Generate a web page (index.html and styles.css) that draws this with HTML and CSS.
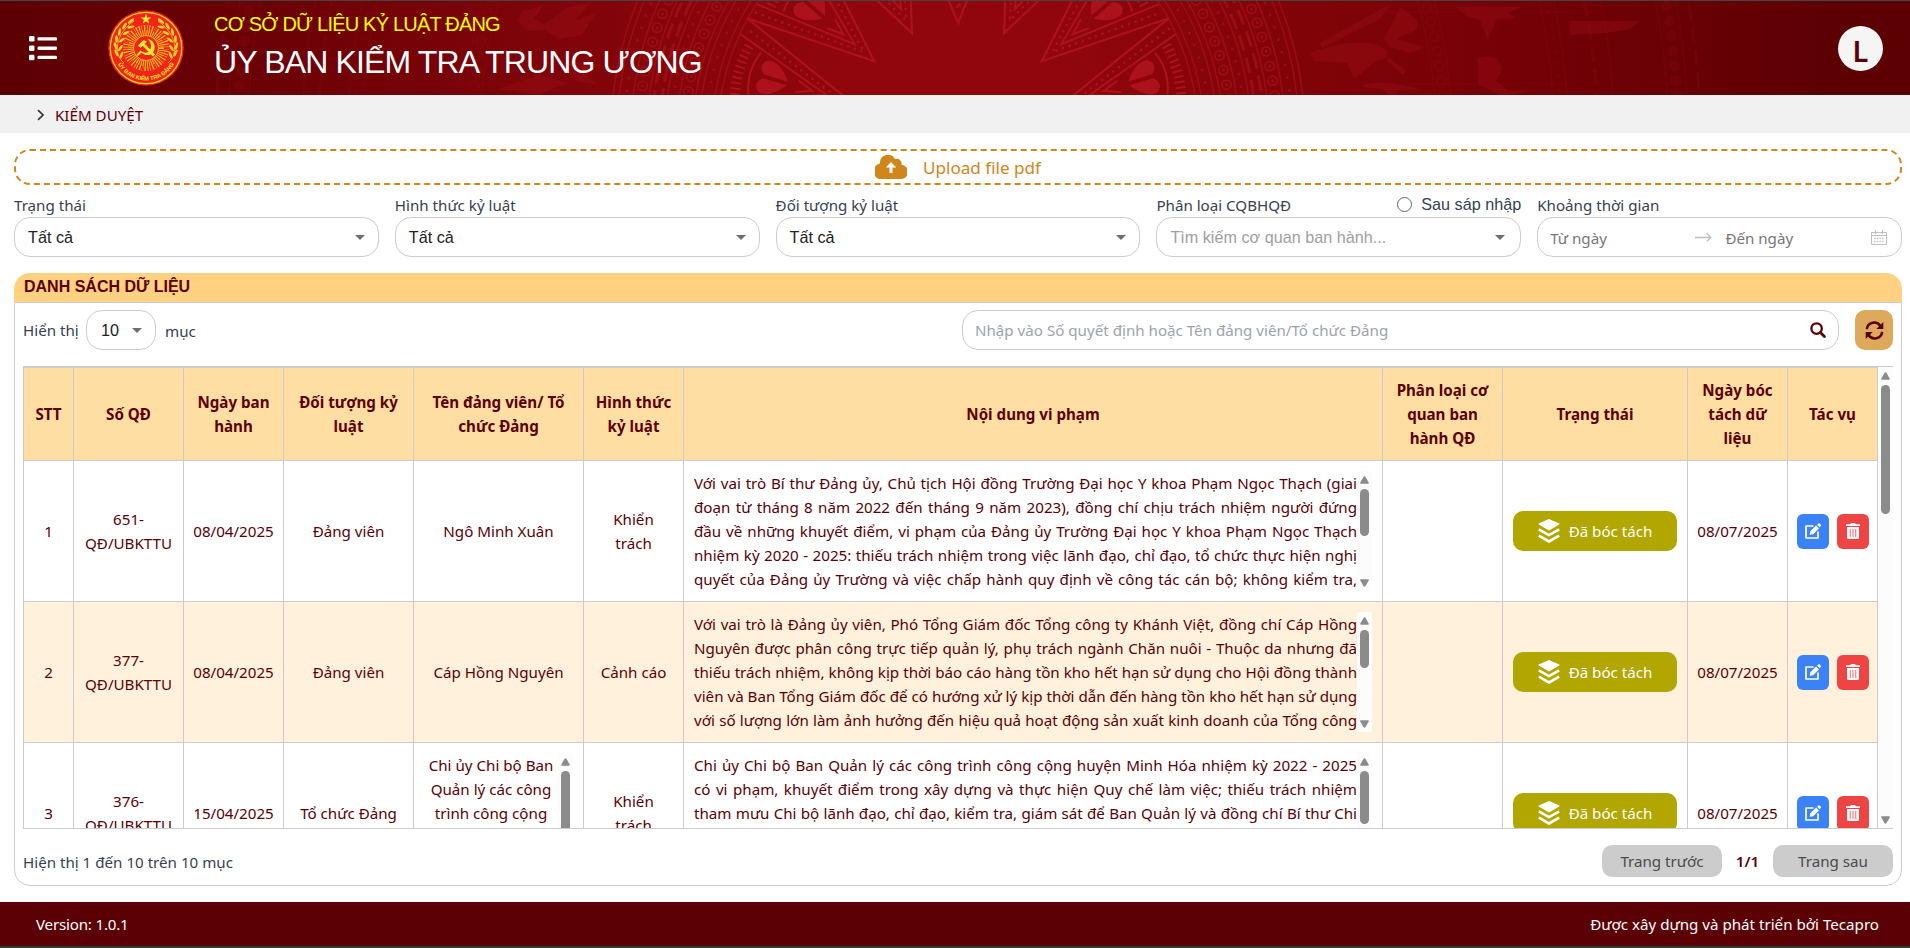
FILE: index.html
```html
<!DOCTYPE html>
<html lang="vi">
<head>
<meta charset="utf-8">
<title>Kiểm duyệt</title>
<link rel="stylesheet" href="styles.css">
</head>
<body>
<svg class="defs" width="0" height="0" aria-hidden="true">
  <symbol id="caret" viewBox="0 0 10 5"><path d="M0 0h10L5 5z" fill="#6f6f6f"/></symbol>
  <symbol id="up" viewBox="0 0 9 8"><path d="M4.5 .3c.4 0 .7.2.9.5l3.3 5.7c.3.6 0 1.2-.7 1.2H1C.3 7.700 0 7.100.3 6.500L3.600.800c.2-.3.5-.5.9-.5z" fill="#8b8b8b"/></symbol>
  <symbol id="layers" viewBox="0 0 22 24">
    <path d="M11 0 L21.300 4.500 Q22 5 21.300 5.600 L11 11.500 L.700 5.600 Q0 5 .700 4.500 Z" fill="#fff"/>
    <path d="M.8 10.300 L11 16.100 L21.200 10.300 M.8 16.700 L11 22.500 L21.200 16.700" fill="none" stroke="#fff" stroke-width="2.600" stroke-linejoin="round"/>
  </symbol>
  <symbol id="edit" viewBox="0 0 16 16">
    <path d="M8.500 3H1v12h12V8.500" fill="none" stroke="#fff" stroke-width="1.700" stroke-linejoin="round"/>
    <path d="M4.700 11.800 5.300 8.300 11.100 2.500 14 5.400 8.200 11.200zM12.100 1.700 13.300.500c.4-.4 1-.4 1.400 0l1 1c.4.4.4 1 0 1.400L14.700 4.300z" fill="#fff"/>
  </symbol>
  <symbol id="trash" viewBox="0 0 14 16">
    <path d="M0 1.200h4.300L5 0h4l.7 1.200H14v1.700H0z" fill="#fff"/>
    <path d="M1 4h12v10.500c0 .9-.6 1.500-1.500 1.500h-9C1.600 16 1 15.400 1 14.500z" fill="#fff"/>
    <path d="M4.300 6v8M7 6v8M9.700 6v8" stroke="#f48b8b" stroke-width="1.300"/>
  </symbol>
  <symbol id="spike" viewBox="-60 -260 120 160" overflow="visible">
    <path d="M-51 -235 L0 -111 L51 -235" stroke-width="2.200"/>
    <path d="M-34 -237 L0 -137 L34 -237" stroke-width="2"/>
    <path d="M-41 -232 L0 -125 L41 -232" stroke-width="2.600" stroke-linecap="round" stroke-dasharray="0 7"/>
    <path d="M-6 -168 L0 -152 L6 -168" stroke-width="2"/>
    <path d="M-2 -178 C-10 -184 -18 -192 -17 -202 C-13 -210 -6 -208 -2 -203 Z M2 -178 C10 -184 18 -192 17 -202 C13 -210 6 -208 2 -203 Z" class="petal"/>
    <path d="M-22 -212 Q0 -221 22 -212" stroke-width="2"/>
    <path d="M-26 -225 Q0 -231 26 -225" stroke-width="10" stroke-dasharray="2 3.500"/>
  </symbol>
</svg>

<header class="topbar">
  <svg class="pattern" viewBox="0 0 1910 94" preserveAspectRatio="none" aria-hidden="true">
    <g class="drum" transform="translate(958 133)">
      <g class="spikes">
        <use href="#spike" x="-60" y="-260" width="120" height="160"/>
        <use href="#spike" x="-60" y="-260" width="120" height="160" transform="rotate(24.500)"/>
        <use href="#spike" x="-60" y="-260" width="120" height="160" transform="rotate(-24.500)"/>
        <use href="#spike" x="-60" y="-260" width="120" height="160" transform="rotate(49)"/>
        <use href="#spike" x="-60" y="-260" width="120" height="160" transform="rotate(-49)"/>
        <use href="#spike" x="-60" y="-260" width="120" height="160" transform="rotate(73.500)"/>
        <use href="#spike" x="-60" y="-260" width="120" height="160" transform="rotate(-73.500)"/>
      </g>
      <g class="rings">
        <circle r="240"/><circle r="246"/>
        <circle r="252.500" class="dots"/>
        <circle r="259"/><circle r="265"/>
        <circle r="273" class="knots"/><circle r="273" class="knots-in"/><circle r="273" class="dots-wide"/>
        <circle r="281"/><circle r="287" class="dots"/>
        <circle r="293"/><circle r="298" class="steps"/><circle r="306" class="steps"/><circle r="311"/>
        <circle r="319" class="knots"/><circle r="319" class="knots-in"/><circle r="319" class="dots-wide"/>
        <circle r="327"/><circle r="334" class="dots"/><circle r="341"/><circle r="347"/>
      </g>
      <g class="faint">
        <circle r="478"/><circle r="486" class="knots"/><circle r="486" class="knots-in"/><circle r="494"/>
        <circle r="596"/><circle r="603" class="dots"/><circle r="610"/><circle r="640" class="steps"/><circle r="656"/>
        <circle r="710"/><circle r="720" class="knots"/><circle r="730"/><circle r="742" class="steps"/>
      </g>
    </g>
    <g class="bird">
      <path d="M1320 42 L1392 2 L1380 18 L1322 47z M1310 52 C1330 44 1360 38 1378 44 C1392 50 1390 58 1376 60 L1354 78 L1347 62 L1314 60z M1384 38 L1400 6 C1416 14 1422 26 1414 30 L1396 38 L1424 46 L1410 52 L1390 46z M1388 56 l18 14 -3 4 -16 -14z M1360 86 c14 -8 34 -4 60 2 l-24 2 4 6 -8 0 -10 -8z"/>
      <path d="M1456 6 h66 l-14 6 8 5 -20 2 -8 20 -8 -20 -14 -4z M1478 58 c10 -6 24 0 24 10 l-6 12 12 10 h24 l-30 5 -24 -12z"/>
      <path d="M1570 20 h70 l-10 8 -24 4 -36 2z"/>
      <path d="M522 10 l22 -6 -10 14 20 10 -26 2 -12 -10z M568 6 l22 -4 -16 18 22 -8 -14 22 -22 4 -20 -12z M498 88 l40 -14 30 8 -16 6 -12 6z M568 60 l34 4 -18 8 14 12 -22 -4z"/>
    </g>
  </svg>
  <svg class="menu" viewBox="0 0 28 25" aria-label="Menu"><g fill="#fff"><rect width="5.500" height="5.500" rx="1.200"/><rect y="9.500" width="5.500" height="5.500" rx="1.200"/><rect y="18.700" width="5.500" height="5.500" rx="1.200"/><rect x="8.500" y="1.200" width="19.500" height="3.400" rx="1.200"/><rect x="8.500" y="10.500" width="19.500" height="3.400" rx="1.200"/><rect x="8.500" y="19.700" width="19.500" height="3.400" rx="1.200"/></g></svg>
  <svg class="emblem" viewBox="-38 -38 76 76" aria-label="Ủy ban kiểm tra Đảng">
    <defs>
      <path id="arc" d="M-30.200 12 A32.500 32.500 0 0 0 30.200 12"/>
      <g id="branch" fill="#f5d327">
        <path d="M-22 15 C-33 6 -31 -14 -12 -27" fill="none" stroke="#f5d327" stroke-width=".8"/>
        <ellipse cx="-29.500" cy="5" rx="1.400" ry="3.800" transform="rotate(-25 -29.500 5)"/><ellipse cx="-30.500" cy="-2" rx="1.400" ry="3.800" transform="rotate(-15 -30.500 -2)"/><ellipse cx="-29.500" cy="-9" rx="1.400" ry="3.800" transform="rotate(0 -29.500 -9)"/><ellipse cx="-26.500" cy="-16" rx="1.400" ry="3.800" transform="rotate(12 -26.500 -16)"/><ellipse cx="-21.500" cy="-22" rx="1.400" ry="3.800" transform="rotate(30 -21.500 -22)"/><ellipse cx="-15" cy="-27" rx="1.400" ry="3.800" transform="rotate(50 -15 -27)"/>
        <ellipse cx="-24.500" cy="7" rx="1.300" ry="3.600" transform="rotate(20 -24.500 7)"/><ellipse cx="-25.500" cy="0" rx="1.300" ry="3.600" transform="rotate(35 -25.500 0)"/><ellipse cx="-24" cy="-8" rx="1.300" ry="3.600" transform="rotate(50 -24 -8)"/><ellipse cx="-20" cy="-15" rx="1.300" ry="3.600" transform="rotate(62 -20 -15)"/><ellipse cx="-15" cy="-21" rx="1.300" ry="3.600" transform="rotate(80 -15 -21)"/>
      </g>
    </defs>
    <circle r="37.700" fill="#f0241a"/>
    <circle r="35.700" fill="none" stroke="#f5d327" stroke-width="1.200"/>
    <circle r="17" fill="none" stroke="#f5c71f" stroke-width="12" stroke-dasharray="1.100 1.125"/>
    <circle r="20.500" fill="none" stroke="#f0241a" stroke-width="5" stroke-dasharray="1.200 3.166"/>
    <circle r="12.500" fill="#f0241a" stroke="#f5d327" stroke-width=".8"/>
    <path d="M0 -34.500l1.300 3.900h4.100l-3.300 2.400 1.200 3.900L0 -26.700l-3.300 2.400 1.200-3.900-3.300-2.400h4.100z" fill="#f9ea2a"/>
    <use href="#branch"/><use href="#branch" transform="scale(-1 1)"/>
    <path d="M1 -9.500 C9 -8 11 1 6 5.500 C3 8 -2 7.500 -4.500 4.500 L-8 8 L-9.500 6.500 L-5.500 2.500 C-2 5.500 1.500 5 3.500 3 C6.500 -1 5 -6.500 1 -9.500z M-8 -2.500 L-2.500 -8 L1 -6.500 L-1.200 -4.300 L9 6.500 L7 8.500 L-3.300 -2.200 L-5.500 0z" fill="#f9ea2a"/>
    <text class="emblem-text" text-anchor="middle"><textPath href="#arc" startOffset="50%">ỦY BAN KIỂM TRA ĐẢNG</textPath></text>
  </svg>
  <div class="brand">
    <div class="brand-sub">CƠ SỞ DỮ LIỆU KỶ LUẬT ĐẢNG</div>
    <div class="brand-main">ỦY BAN KIỂM TRA TRUNG ƯƠNG</div>
  </div>
  <div class="avatar">L</div>
</header>

<nav class="crumbs">
  <svg width="7" height="12" viewBox="0 0 7 12"><path d="M1 1.200 6 6 1 10.800" fill="none" stroke="#333" stroke-width="1.600"/></svg>
  <span>KIỂM DUYỆT</span>
</nav>

<main>
  <div class="upload">
    <svg width="32" height="24" viewBox="0 0 32 24"><path d="M26.500 9.800A5 5 0 0 0 20 4 8 8 0 0 0 5 7.600v1A7.800 7.800 0 0 0 7.500 24H25.500A7 7 0 0 0 26.500 9.800z" fill="#d1861b"/><path d="M16 7l5.200 5.600h-3.700V18h-3v-5.400h-3.700z" fill="#fff"/></svg>
    <span>Upload file pdf</span>
  </div>

  <section class="filters">
    <div><label>Trạng thái</label><div class="field"><span>Tất cả</span><svg class="caret"><use href="#caret"/></svg></div></div>
    <div><label>Hình thức kỷ luật</label><div class="field"><span>Tất cả</span><svg class="caret"><use href="#caret"/></svg></div></div>
    <div><label>Đối tượng kỷ luật</label><div class="field"><span>Tất cả</span><svg class="caret"><use href="#caret"/></svg></div></div>
    <div><div class="label-row"><label>Phân loại CQBHQĐ</label><span class="radio"><i></i>Sau sáp nhập</span></div><div class="field muted"><span>Tìm kiếm cơ quan ban hành...</span><svg class="caret"><use href="#caret"/></svg></div></div>
    <div><label>Khoảng thời gian</label><div class="field range"><span class="from">Từ ngày</span>
      <svg width="17" height="10" viewBox="0 0 17 10"><path d="M0 5.500h15.500M11.500 1l4.300 4.500-4 3.800" fill="none" stroke="#bfbfbf" stroke-width="1.300"/></svg>
      <span class="to">Đến ngày</span>
      <svg width="16" height="15" viewBox="0 0 16 15"><g fill="none" stroke="#c0c0c0"><path d="M.5 2.500h15v12H.5zM.5 5.500h15M4.500 0v4M11.500 0v4"/><path d="M3 8.500h10M3 11.500h10" stroke-width="1.500" stroke-dasharray="1.500 1.200"/></g></svg>
    </div></div>
  </section>

  <section class="panel">
    <h2>DANH SÁCH DỮ LIỆU</h2>
    <div class="panel-body">
      <div class="tools">
        <span class="show">Hiển thị</span>
        <div class="field size"><span>10</span><svg class="caret"><use href="#caret"/></svg></div>
        <span class="unit">mục</span>
        <div class="field search"><span>Nhập vào Số quyết định hoặc Tên đảng viên/Tổ chức Đảng</span>
          <svg width="16" height="16" viewBox="0 0 16 16"><circle cx="6.600" cy="6.600" r="5.200" fill="none" stroke="#5b0005" stroke-width="2.300"/><path d="M10.400 10.400l4 4" stroke="#5b0005" stroke-width="2.800" stroke-linecap="round"/></svg></div>
        <div class="refresh"><svg width="19" height="19" viewBox="0 0 19 19"><g fill="none" stroke="#5b0005" stroke-width="2.500"><path d="M1.800 8.200A7.500 7.500 0 0 1 15.500 5M17.200 10.800A7.500 7.500 0 0 1 3.500 14"/></g><path d="M18.300 1v7h-7zM.7 18v-7h7z" fill="#5b0005"/></svg></div>
      </div>

      <div class="grid-wrap">
        <table>
          <colgroup><col class="c1"><col class="c2"><col class="c3"><col class="c4"><col class="c5"><col class="c6"><col class="c7"><col class="c8"><col class="c9"><col class="c10"><col class="c11"></colgroup>
          <thead><tr><th>STT</th><th>Số QĐ</th><th>Ngày ban<br>hành</th><th>Đối tượng kỷ<br>luật</th><th>Tên đảng viên/ Tổ<br>chức Đảng</th><th>Hình thức<br>kỷ luật</th><th>Nội dung vi phạm</th><th>Phân loại cơ<br>quan ban<br>hành QĐ</th><th>Trạng thái</th><th>Ngày bóc<br>tách dữ<br>liệu</th><th>Tác vụ</th></tr></thead>
          <tbody>
            <tr>
              <td>1</td><td>651-<br>QĐ/UBKTTU</td><td>08/04/2025</td><td>Đảng viên</td><td>Ngô Minh Xuân</td><td>Khiển<br>trách</td>
              <td><div class="scroll"><div class="lines"><p>Với vai trò Bí thư Đảng ủy, Chủ tịch Hội đồng Trường Đại học Y khoa Phạm Ngọc Thạch (giai</p><p>đoạn từ tháng 8 năm 2022 đến tháng 9 năm 2023), đồng chí chịu trách nhiệm người đứng</p><p>đầu về những khuyết điểm, vi phạm của Đảng ủy Trường Đại học Y khoa Phạm Ngọc Thạch</p><p>nhiệm kỳ 2020 - 2025: thiếu trách nhiệm trong việc lãnh đạo, chỉ đạo, tổ chức thực hiện nghị</p><p>quyết của Đảng ủy Trường và việc chấp hành quy định về công tác cán bộ; không kiểm tra,</p></div><div class="bar"><svg><use href="#up"/></svg><i class="t1"></i><svg class="down"><use href="#up"/></svg></div></div></td>
              <td></td><td><div class="status"><svg><use href="#layers"/></svg>Đã bóc tách</div></td><td>08/07/2025</td>
              <td><div class="acts"><span class="edit"><svg><use href="#edit"/></svg></span><span class="del"><svg><use href="#trash"/></svg></span></div></td>
            </tr>
            <tr class="alt">
              <td>2</td><td>377-<br>QĐ/UBKTTU</td><td>08/04/2025</td><td>Đảng viên</td><td>Cáp Hồng Nguyên</td><td>Cảnh cáo</td>
              <td><div class="scroll"><div class="lines"><p>Với vai trò là Đảng ủy viên, Phó Tổng Giám đốc Tổng công ty Khánh Việt, đồng chí Cáp Hồng</p><p>Nguyên được phân công trực tiếp quản lý, phụ trách ngành Chăn nuôi - Thuộc da nhưng đã</p><p>thiếu trách nhiệm, không kịp thời báo cáo hàng tồn kho hết hạn sử dụng cho Hội đồng thành</p><p>viên và Ban Tổng Giám đốc để có hướng xử lý kịp thời dẫn đến hàng tồn kho hết hạn sử dụng</p><p>với số lượng lớn làm ảnh hưởng đến hiệu quả hoạt động sản xuất kinh doanh của Tổng công</p></div><div class="bar"><svg><use href="#up"/></svg><i class="t2"></i><svg class="down"><use href="#up"/></svg></div></div></td>
              <td></td><td><div class="status"><svg><use href="#layers"/></svg>Đã bóc tách</div></td><td>08/07/2025</td>
              <td><div class="acts"><span class="edit"><svg><use href="#edit"/></svg></span><span class="del"><svg><use href="#trash"/></svg></span></div></td>
            </tr>
            <tr>
              <td>3</td><td>376-<br>QĐ/UBKTTU</td><td>15/04/2025</td><td>Tổ chức Đảng</td>
              <td><div class="scroll"><div class="lines centered"><p>Chi ủy Chi bộ Ban</p><p>Quản lý các công</p><p>trình công cộng</p></div><div class="bar"><svg><use href="#up"/></svg><i class="t4"></i><svg class="down"><use href="#up"/></svg></div></div></td>
              <td>Khiển<br>trách</td>
              <td><div class="scroll"><div class="lines"><p>Chi ủy Chi bộ Ban Quản lý các công trình công cộng huyện Minh Hóa nhiệm kỳ 2022 - 2025</p><p>có vi phạm, khuyết điểm trong xây dựng và thực hiện Quy chế làm việc; thiếu trách nhiệm</p><p>tham mưu Chi bộ lãnh đạo, chỉ đạo, kiểm tra, giám sát để Ban Quản lý và đồng chí Bí thư Chi</p></div><div class="bar"><svg><use href="#up"/></svg><i class="t3"></i><svg class="down"><use href="#up"/></svg></div></div></td>
              <td></td><td><div class="status"><svg><use href="#layers"/></svg>Đã bóc tách</div></td><td>08/07/2025</td>
              <td><div class="acts"><span class="edit"><svg><use href="#edit"/></svg></span><span class="del"><svg><use href="#trash"/></svg></span></div></td>
            </tr>
          </tbody>
        </table>
        <div class="bar main-bar"><svg><use href="#up"/></svg><i></i><svg class="down"><use href="#up"/></svg></div>
      </div>

      <div class="pager">
        <span class="info">Hiện thị 1 đến 10 trên 10 mục</span>
        <span class="btn">Trang trước</span><b>1/1</b><span class="btn">Trang sau</span>
      </div>
    </div>
  </section>
</main>

<footer><span class="version">Version: 1.0.1</span><span>Được xây dựng và phát triển bởi Tecapro</span></footer>
</body>
</html>
```

FILE: styles.css
```css
* { box-sizing: border-box; }
body {
  margin: 0;
  height: 948px;
  overflow: hidden;
  display: flex;
  flex-direction: column;
  background: #fff;
  color: #374151;
  font: 15.15px/24px "Noto Sans", "Open Sans", sans-serif;
}
.defs { position: absolute; }
svg { display: block; flex: none; }

.topbar {
  position: relative;
  height: 95px;
  flex: none;
  display: flex;
  align-items: center;
  padding: 0 27px 0 29px;
  border-top: 1px solid #444;
  background: linear-gradient(90deg, #5c0004 0, #690106 12%, #7e0409 28%, #90060c 44%, #90060c 56%, #800307 68%, #740106 80%, #5c0004 96%);
  color: #fff;
  font-family: "Liberation Sans", Arial, sans-serif;
}
.pattern { position: absolute; inset: 0; width: 100%; height: 100%; }
.menu, .emblem, .brand, .avatar { position: relative; }
.drum { fill: none; stroke: #b3151f; }
.spikes { opacity: .85; }
.petal { fill: #b3151f; stroke: none; }
.rings { stroke: #aa131c; stroke-width: 1.6; opacity: .62; }
.faint { stroke: #a5141c; stroke-width: 1.4; opacity: .16; }
.dots { stroke-width: 3; stroke-linecap: round; stroke-dasharray: 0 13; }
.knots { stroke-width: 11; stroke-linecap: round; stroke-dasharray: 0 15; }
.knots-in { stroke: #82040a; stroke-width: 7.5; stroke-linecap: round; stroke-dasharray: 0 15; }
.dots-wide { stroke-width: 3; stroke-linecap: round; stroke-dasharray: 0 15; }
.steps { stroke-width: 3; stroke-dasharray: 16 7; }
.bird { fill: #a5141c; opacity: .3; }
.menu { width: 28px; height: 25px; }
.emblem { width: 76px; height: 76px; margin-left: 51px; }
.emblem-text { font: bold 5.6px "Liberation Sans", sans-serif; fill: #f9ea2a; }
.brand { margin-left: 30px; flex: 1; align-self: flex-start; white-space: nowrap; }
.brand-sub { margin-top: 11px; font-size: 20px; line-height: 24px; letter-spacing: -.8px; color: #ff0; }
.brand-main { margin-top: 8px; font-size: 32px; line-height: 36px; letter-spacing: -.85px; }
.avatar {
  width: 45px; height: 45px; border-radius: 50%;
  display: flex; align-items: center; justify-content: center;
  padding-top: 5px;
  background: #f5f5f5; color: #5b0005;
  font: 600 29px/40px "Noto Sans", sans-serif;
}

.crumbs {
  height: 38px; flex: none;
  display: flex; align-items: center; gap: 11px;
  padding: 1px 37px 0;
  background: #f1f1f1; color: #5b0005;
}

main { flex: 1; padding: 16px 8px 0 14px; min-height: 0; }
.upload {
  height: 36px;
  display: flex; align-items: center; justify-content: center; gap: 16px;
  border: 2px dashed #d1861b; border-radius: 16px;
  color: #d1861b; font-size: 17.1px;
}
.upload span { padding-top: 1px; }
.filters {
  display: grid; grid-template-columns: repeat(5, minmax(0, 1fr)); gap: 16px;
  margin-top: 8px;
}
.filters label { display: block; height: 24px; line-height: 25px; }
.label-row { display: flex; justify-content: space-between; }
.radio { display: flex; align-items: center; gap: 9px; height: 23px; font: 16.2px/23px "Liberation Sans", sans-serif; }
.radio i { width: 15px; height: 15px; border: 1px solid #666; border-radius: 50%; }
.field {
  display: flex; align-items: center; justify-content: space-between;
  height: 40px; padding: 0 13px;
  border: 1px solid #ccc; border-radius: 16px;
  font: 16.2px/24px "Liberation Sans", sans-serif; color: #222;
}
.field span { white-space: nowrap; }
.field.muted { color: #a0a0a0; padding-right: 15px; }
.caret { width: 10px; height: 5px; }
.range { font: 15.15px/24px "Noto Sans", sans-serif; color: #777; padding: 0 14px 0 12px; }
.range .from { width: 131px; padding-top: 1px; }
.range .to { width: 132px; padding-top: 1px; }

.panel { margin-top: 16px; height: 613px; display: flex; flex-direction: column; }
.panel h2 {
  margin: 0; height: 29px; padding: 0 10px;
  background: #ffd180; color: #5b0005;
  border-radius: 16px 16px 0 0;
  font: bold 16px/27px "Liberation Sans", sans-serif;
}
.panel-body { flex: 1; border: 1px solid #ccc; border-radius: 0 0 16px 16px; padding: 7px 8px 8px; min-height: 0; }
.tools { display: flex; align-items: center; height: 40px; }
.show { width: 63px; }
.unit { margin-left: 9px; padding-top: 1px; }
.size { width: 70px; padding: 0 13px 0 14px; }
.search { width: 877px; margin-left: auto; padding: 0 12px; font: 15.15px/24px "Noto Sans", sans-serif; color: #9ca3af; }
.refresh { width: 38px; height: 40px; margin-left: 16px; border-radius: 10px; background: #dea95b; display: flex; align-items: center; justify-content: center; }

.grid-wrap {
  margin-top: 16px; height: 463px; overflow: hidden;
  display: flex;
  border-top: 1px solid #ccc; border-bottom: 1px solid #ccc;
}
table { width: 1855px; flex: none; align-self: flex-start; table-layout: fixed; border-collapse: separate; border-spacing: 0; color: #5b0005; text-align: center; }
.c1 { width: 51px; } .c2 { width: 110px; } .c3 { width: 100px; } .c4 { width: 130px; } .c5 { width: 170px; } .c6 { width: 100px; }
.c7 { width: 699px; } .c8 { width: 120px; } .c9 { width: 185px; } .c10 { width: 100px; } .c11 { width: 90px; }
th, td { padding: 0; border-right: 1px solid #ccc; border-bottom: 1px solid #ccc; vertical-align: middle; white-space: nowrap; }
th:first-child, td:first-child { border-left: 1px solid #ccc; }
th { height: 94px; background: #ffdea3; border-top: 1px solid #ccc; font-weight: 700; }
td { height: 141px; }
.alt { background: #fff1dc; }
.scroll { display: flex; height: 120px; margin: 0 10px; }
.lines { flex: 1; min-width: 0; }
.lines p { margin: 0; text-align: left; text-align-last: justify; }
.lines.centered p { text-align: center; text-align-last: center; }
.bar { width: 15px; flex: none; display: flex; flex-direction: column; align-items: center; padding: 5px 0 4px; background: #fcfcfc; }
.bar svg { width: 9px; height: 8px; }
.bar .down { transform: rotate(180deg); margin-top: auto; }
.bar i { width: 9px; margin-top: 5px; border-radius: 5px; background: #8b8b8b; }
.t1 { height: 47px; } .t2 { height: 38px; } .t3 { height: 53px; } .t4 { height: 70px; }
.main-bar i { height: 129px; }
.status {
  width: 164px; height: 40px; margin: 0 auto;
  display: flex; align-items: center; justify-content: center; gap: 9px;
  border-radius: 10px; background: #b2a600; color: #fff;
}
.status svg { width: 22px; height: 24px; }
.acts { display: flex; justify-content: center; gap: 8px; }
.acts span { width: 32px; height: 35px; display: flex; align-items: center; justify-content: center; border-radius: 6px; }
.edit { background: #3b82f6; } .del { background: #ef4444; }
.edit svg { width: 16px; height: 16px; } .del svg { width: 14px; height: 16px; }

.pager { display: flex; align-items: center; height: 32px; margin-top: 16px; }
.info { flex: 1; padding-top: 1px; }
.btn { width: 120px; height: 32px; line-height: 33px; text-align: center; border-radius: 10px; background: #ccc; color: #4b4b4b; }
.pager b { width: 51px; text-align: center; color: #5b0005; font-weight: 600; }

footer {
  height: 46px; flex: none; padding: 0 31px 0 36px;
  display: flex; justify-content: space-between; align-items: center;
  background: #5b0005; color: #fff; border-bottom: 2px solid #2f3a30;
}
.version { letter-spacing: -.2px; }
```
